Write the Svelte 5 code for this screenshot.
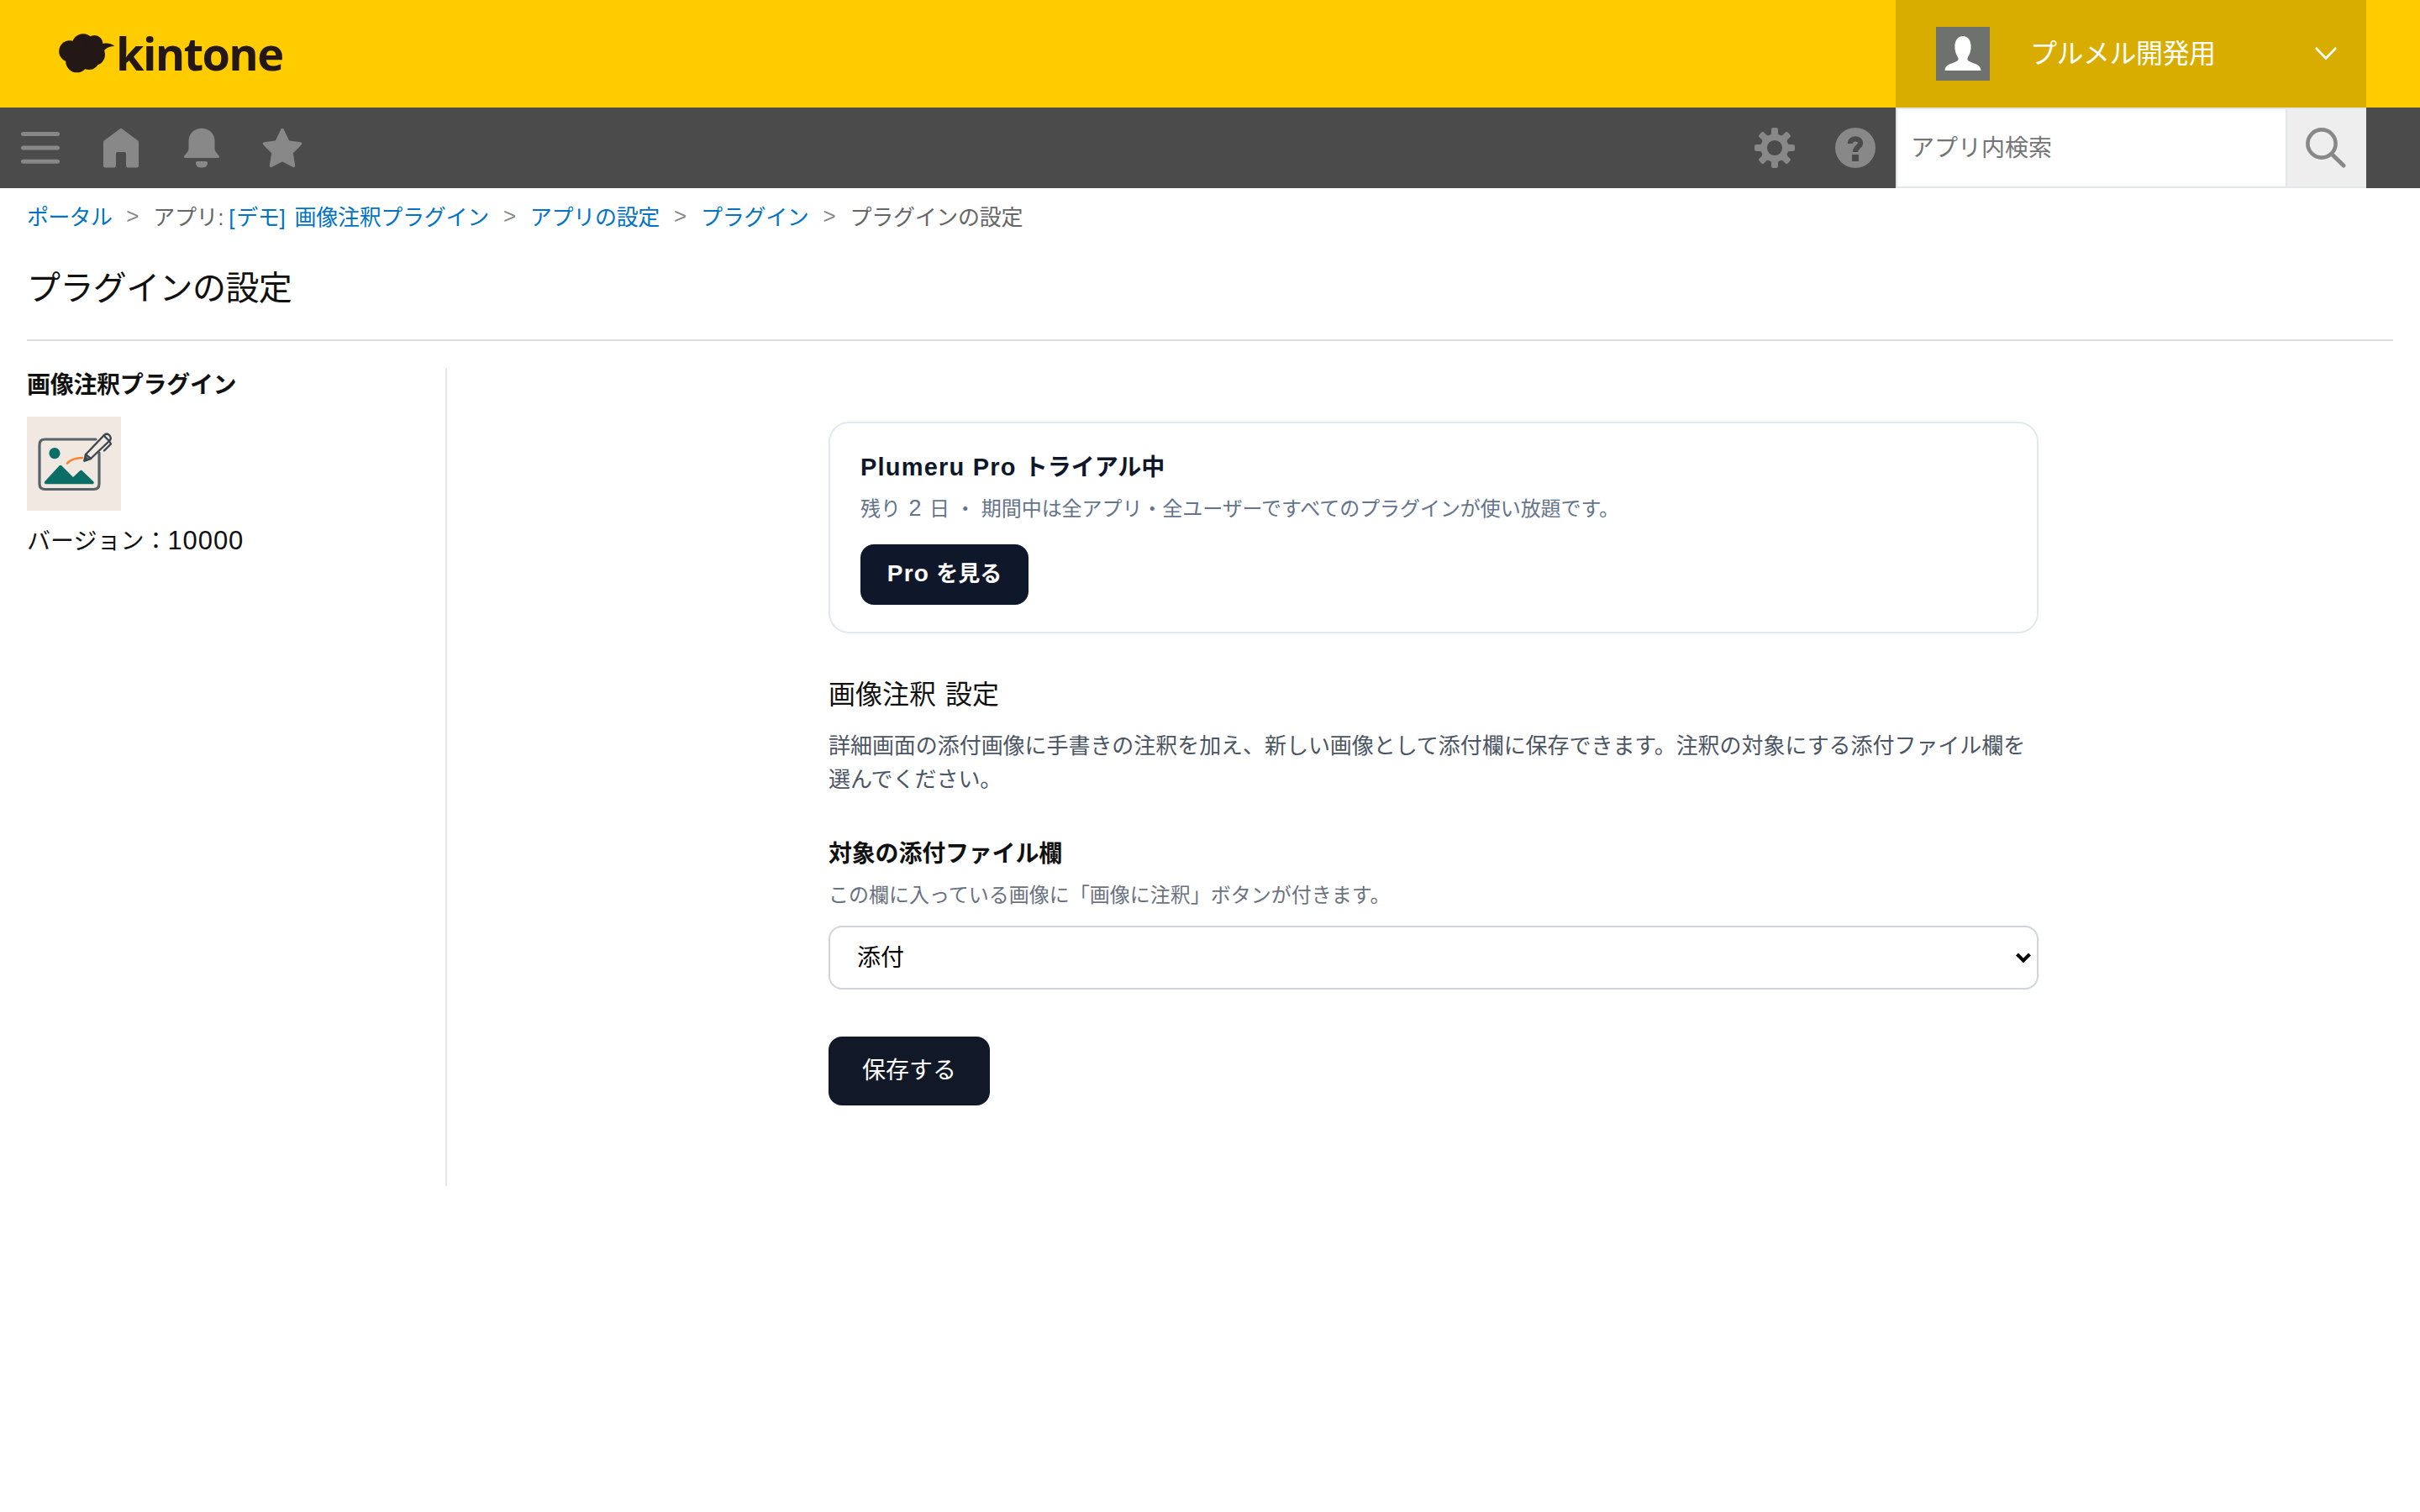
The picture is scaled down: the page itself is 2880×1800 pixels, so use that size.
<script>
  let keyword = "";
  let field = "添付";
  let fields = ["添付"];
</script>

<header class="header">
  <a class="logo" href="#top">
    <svg width="68" height="50" viewBox="0 0 68 50">
      <circle cx="13" cy="22" r="12.8" />
      <circle cx="29" cy="14.5" r="13.3" />
      <circle cx="42.5" cy="13" r="10" />
      <circle cx="21.5" cy="34" r="13.3" />
      <circle cx="36" cy="32" r="12" />
      <circle cx="42" cy="26" r="13" />
      <path d="M50 14 C55 11.6 62 12.3 66.5 16 C61 16 57 17.5 54 21 L46 26 Z" />
    </svg>
    <span>kintone</span>
  </a>
  <div class="user">
    <svg class="avatar" width="64" height="64" viewBox="0 0 64 64">
      <rect width="64" height="64" fill="#6f716f" />
      <path
        fill="#fff"
        d="M32 11c6 0 9.600 5 9.600 12.500 0 6.500-2 9.500-4 13.500-.8 2 .4 3.200 2.400 4.200C46 44 53.500 45 53.500 52H10.500c0-7 7.500-8 13.500-10.800 2-1 3.200-2.200 2.400-4.200-2-4-4-7-4-13.500C22.400 16 26 11 32 11z"
      />
    </svg>
    <span class="user-name">プルメル開発用</span>
    <svg class="chevron" width="26" height="18" viewBox="0 0 26 18">
      <path d="M1 2 L13 14.500 L25 2" fill="none" stroke="#fff" stroke-width="2.600" />
    </svg>
  </div>
</header>

<nav class="toolbar">
  <div class="icons">
    <svg viewBox="0 0 48 48">
      <path d="M3.500 7.500h41M3.500 24h41M3.500 40.300h41" stroke="#888" stroke-width="5" stroke-linecap="round" />
    </svg>
    <svg viewBox="0 0 48 48">
      <path d="M23 1.300q1-.8 2 0L44 15.200q1 .8 1 2V45.500q0 2-2 2H32q-2 0-2-2V31q0-2-2-2h-8q-2 0-2 2V45.500q0 2-2 2H5q-2 0-2-2V17.200q0-1.200 1-2z" />
    </svg>
    <svg viewBox="0 0 48 48">
      <path d="M24 .8c9 0 15.500 6.500 15.500 15V25c0 4 5.500 7.500 5.500 9.500q0 1.500-1.500 1.500H4.500Q3 36 3 34.500C3 32.500 8.500 29 8.500 25V15.800C8.500 7.300 15 .8 24 .8z" />
      <path d="M19 40H29q2 0 2 2 0 5.500-7 5.500T17 42q0-2 2-2z" />
    </svg>
    <svg viewBox="0 0 48 48">
      <path
        d="M24 2.500 L31 17 L45.500 19 L35 29.800 L37.500 45.500 L24 38.500 L10.500 45.500 L13 29.800 L2.500 19 L17 17 Z"
        stroke="#888"
        stroke-width="3.500"
        stroke-linejoin="round"
      />
    </svg>
  </div>
  <div class="icons right">
    <svg viewBox="0 0 48 48">
      <g>
        {#each [0, 45, 90, 135, 180, 225, 270, 315] as angle}
          <path
            transform="rotate({angle} 24 24)"
            d="M17 11.500 Q20 9 20 6 V2 Q20 0 22 0 H26 Q28 0 28 2 V6 Q28 9 31 11.500 Z"
          />
        {/each}
      </g>
      <circle cx="24" cy="24" r="12.800" fill="none" stroke="#888" stroke-width="7.400" />
    </svg>
    <svg viewBox="0 0 48 48">
      <circle cx="24" cy="24" r="24" />
      <path
        d="M17.800 19 C17.800 11.800 30 11.500 30 18.500 C30 23 24 22.500 24 29"
        fill="none"
        stroke="#4b4b4b"
        stroke-width="6.200"
      />
      <rect x="20" y="32" width="8" height="8" fill="#4b4b4b" />
    </svg>
  </div>
  <form class="search" on:submit|preventDefault>
    <input type="text" placeholder="アプリ内検索" bind:value={keyword} />
    <button aria-label="検索">
      <svg width="48" height="48" viewBox="0 0 48 48">
        <circle cx="19" cy="19" r="16.600" fill="none" stroke="#888" stroke-width="4.600" />
        <path d="M31 31.500 L45 45" stroke="#888" stroke-width="5" stroke-linecap="round" />
      </svg>
    </button>
  </form>
</nav>

<div class="breadcrumb">
  <a class="portal" href="#portal">ポータル</a>
  <i>&gt;</i>
  <span
    >アプリ<b class="colon">:</b><a href="#app"
      ><b class="open">[</b>デモ<b class="close">]</b>画像注釈プラグイン</a
    ></span
  >
  <i>&gt;</i>
  <a href="#settings">アプリの設定</a>
  <i>&gt;</i>
  <a href="#plugins">プラグイン</a>
  <i>&gt;</i>
  <span>プラグインの設定</span>
</div>

<h1>プラグインの設定</h1>

<div class="content">
  <aside>
    <h2>画像注釈プラグイン</h2>
    <svg class="plugin-icon" width="112" height="112" viewBox="0 0 112 112">
      <rect width="112" height="112" fill="#f0e8e1" />
      <path
        d="M82 27 H21.500 Q15 27 15 33.500 V80 Q15 86.500 21.500 86.500 H79.500 Q86 86.500 86 80 V43"
        fill="none"
        stroke="#56646a"
        stroke-width="3.200"
        stroke-linecap="round"
      />
      <circle cx="33" cy="43.700" r="6.600" fill="#0b6e66" />
      <path
        d="M22.500 78.500 L40 59.500 L55 74.500 L64.500 65.500 L78 78.500 Z"
        fill="#0b6e66"
        stroke="#0b6e66"
        stroke-width="3.500"
        stroke-linejoin="round"
      />
      <path d="M48 55.500 Q54 49 66 49" fill="none" stroke="#f58634" stroke-width="2.600" stroke-linecap="round" />
      <g fill="#f0e8e1" stroke="#3b464f" stroke-width="2.400" stroke-linejoin="round" stroke-linecap="round">
        <path d="M68.500 52.500 L70 45 L91.500 22.500 Q95 19 98 22 Q101.500 25.500 98 29 L76 50 Z" />
        <path d="M91.500 22.500 L98 29 M70 45 L76 50 M98 29 L100 32.500 L92 40.500" fill="none" />
        <path d="M68.500 52.500 L70 48.500 L72.500 51 Z" fill="#3b464f" />
      </g>
    </svg>
    <p>バージョン：<span>10000</span></p>
  </aside>

  <main>
    <section class="card">
      <h3><span>Plumeru Pro</span>トライアル中</h3>
      <p>残り<b class="two">2</b>日<b class="dot">・</b>期間中は全アプリ・全ユーザーですべてのプラグインが使い放題です。</p>
      <button class="pro"><span>Pro</span>を見る</button>
    </section>

    <h2>画像注釈<span class="space"></span>設定</h2>
    <p class="description">
      詳細画面の添付画像に手書きの注釈を加え、新しい画像として添付欄に保存できます。注釈の対象にする添付ファイル欄を選んでください。
    </p>

    <label for="field">対象の添付ファイル欄</label>
    <p class="hint">この欄に入っている画像に「画像に注釈」ボタンが付きます。</p>
    <div class="select">
      <select id="field" bind:value={field}>
        {#each fields as name}
          <option value={name}>{name}</option>
        {/each}
      </select>
      <svg width="18" height="13" viewBox="0 0 18 13">
        <path d="M1.500 2 L9 9.500 L16.500 2" fill="none" stroke="#000" stroke-width="4" />
      </svg>
    </div>
    <button class="save">保存する</button>
  </main>
</div>

<style>
  :global(body) {
    font-family: "Noto Sans CJK JP", sans-serif;
    background-color: #fff;
    color: #111;
  }

  h1,
  h2,
  h3,
  p {
    margin: 0;
    font-weight: 400;
  }

  a {
    color: #0073c4;
    text-decoration: none;
  }

  button,
  input,
  select {
    font-family: inherit;
    border: none;
    padding: 0;
    box-sizing: border-box;
  }

  svg {
    display: block;
    flex: none;
  }

  .header {
    display: flex;
    justify-content: space-between;
    height: 128px;
    padding-right: 64px;
    background-color: #ffcc00;
  }

  .logo {
    display: flex;
    align-items: center;
    padding-left: 70px;
    color: #231815;
    fill: #231815;
  }

  .logo span {
    padding-bottom: 3px;
    font-family: "Open Sans", sans-serif;
    font-size: 54px;
    font-weight: 700;
    line-height: 74px;
    letter-spacing: -1.6px;
  }

  .user {
    display: flex;
    align-items: center;
    box-sizing: border-box;
    width: 560px;
    padding: 0 35px 0 48px;
    background-color: #d9ad00;
    color: #fff;
  }

  .user-name {
    flex: 1;
    margin-left: 48px;
    padding-bottom: 6px;
    font-size: 32px;
    line-height: 40px;
    letter-spacing: -0.5px;
  }

  .toolbar {
    display: flex;
    height: 96px;
    padding-right: 64px;
    background-color: #4b4b4b;
  }

  .icons {
    display: flex;
    flex: 1;
    align-items: center;
    gap: 48px;
    padding: 0 24px;
    fill: #888;
  }

  .icons svg {
    width: 48px;
    height: 48px;
  }

  .right {
    justify-content: flex-end;
  }

  .search {
    display: flex;
    box-sizing: border-box;
    width: 560px;
    border: 2px solid #e3e7e8;
    border-right: none;
    background-color: #fff;
  }

  .search input {
    flex: 1;
    min-width: 0;
    padding: 0 0 4px 16px;
    font-size: 28px;
    outline: none;
  }

  .search input::placeholder {
    color: #757575;
  }

  .search button {
    display: flex;
    align-items: center;
    justify-content: center;
    width: 96px;
    padding-right: 2px;
    border-left: 2px solid #e3e7e8;
    background-color: #eee;
  }

  .breadcrumb {
    display: flex;
    height: 63px;
    padding: 1px 0 0 32px;
    font-size: 26px;
    line-height: 64px;
    letter-spacing: -0.3px;
    color: #666;
  }

  .portal {
    letter-spacing: -0.7px;
  }

  .breadcrumb i {
    width: 49px;
    font-family: "Liberation Sans", sans-serif;
    font-style: normal;
    text-align: center;
    color: #888;
  }

  .breadcrumb b {
    font-family: "Liberation Sans", sans-serif;
    font-weight: 400;
  }

  .colon {
    margin-right: 6px;
  }

  .open {
    margin-right: 2px;
  }

  .close {
    margin-right: 11px;
  }

  h1 {
    height: 116px;
    margin: 0 32px;
    border-bottom: 2px solid #ddd;
    font-size: 40px;
    line-height: 104px;
    letter-spacing: -0.6px;
  }

  .content {
    display: flex;
    padding: 32px 32px 0;
  }

  aside {
    box-sizing: border-box;
    width: 500px;
    height: 974px;
    border-right: 2px solid #e3e7e8;
  }

  aside h2 {
    font-size: 28px;
    font-weight: 700;
    line-height: 36px;
    letter-spacing: -0.3px;
  }

  .plugin-icon {
    margin: 22px 0 14px;
  }

  aside p {
    font-size: 28px;
    line-height: 40px;
  }

  aside p span {
    font-family: "Liberation Sans", sans-serif;
    font-size: 31px;
    line-height: 1;
    letter-spacing: 0.9px;
  }

  main {
    width: 1440px;
    margin-left: 454px;
    padding-top: 64px;
  }

  .card {
    padding: 30px 36px 32px;
    border: 2px solid #e2e8f0;
    border-radius: 24px;
  }

  .card h3 {
    font-size: 28px;
    font-weight: 700;
    line-height: 40px;
    color: #0f172a;
  }

  .card h3 span,
  .pro span {
    margin-right: 9px;
    font-family: "Liberation Sans", sans-serif;
    font-size: 29px;
    line-height: 1;
    letter-spacing: 1.200px;
  }

  .card p {
    margin: 12px 0 26px;
    font-size: 24px;
    line-height: 36px;
    letter-spacing: -0.06px;
    color: #64748b;
  }

  .card b {
    display: inline-block;
    font-weight: 400;
    text-align: center;
  }

  .two {
    width: 34px;
    font-family: "Liberation Sans", sans-serif;
    font-size: 27px;
    line-height: 1;
  }

  .dot {
    width: 38px;
  }

  .pro {
    display: block;
    width: 200px;
    height: 72px;
    padding-bottom: 7px;
    border-radius: 16px;
    background-color: #0f172a;
    color: #fff;
    font-size: 26px;
    font-weight: 700;
  }

  .pro span {
    margin-right: 8px;
    font-size: 28px;
  }

  main h2 {
    margin-top: 46px;
    font-size: 32px;
    line-height: 48px;
  }

  .space {
    display: inline-block;
    width: 11px;
  }

  .description {
    margin: 18px 0 47px;
    font-size: 26px;
    line-height: 40.3px;
    letter-spacing: -0.05px;
    color: #4b5563;
  }

  label {
    display: block;
    font-size: 28px;
    font-weight: 700;
    line-height: 40px;
    letter-spacing: -0.2px;
  }

  .hint {
    margin: 12px 0 20px;
    font-size: 24px;
    line-height: 36px;
    color: #6b7280;
  }

  .select {
    display: flex;
    position: relative;
    height: 76px;
  }

  select {
    flex: 1;
    padding: 0 32px 4px;
    border: 2px solid #d1d5db;
    border-radius: 16px;
    background-color: #fff;
    color: #000;
    font-size: 28px;
    appearance: none;
  }

  .select svg {
    position: absolute;
    top: 32px;
    right: 9px;
  }

  .save {
    display: block;
    width: 192px;
    height: 82px;
    margin-top: 56px;
    padding-bottom: 6px;
    border-radius: 16px;
    background-color: #111827;
    color: #fff;
    font-size: 28px;
  }
</style>
